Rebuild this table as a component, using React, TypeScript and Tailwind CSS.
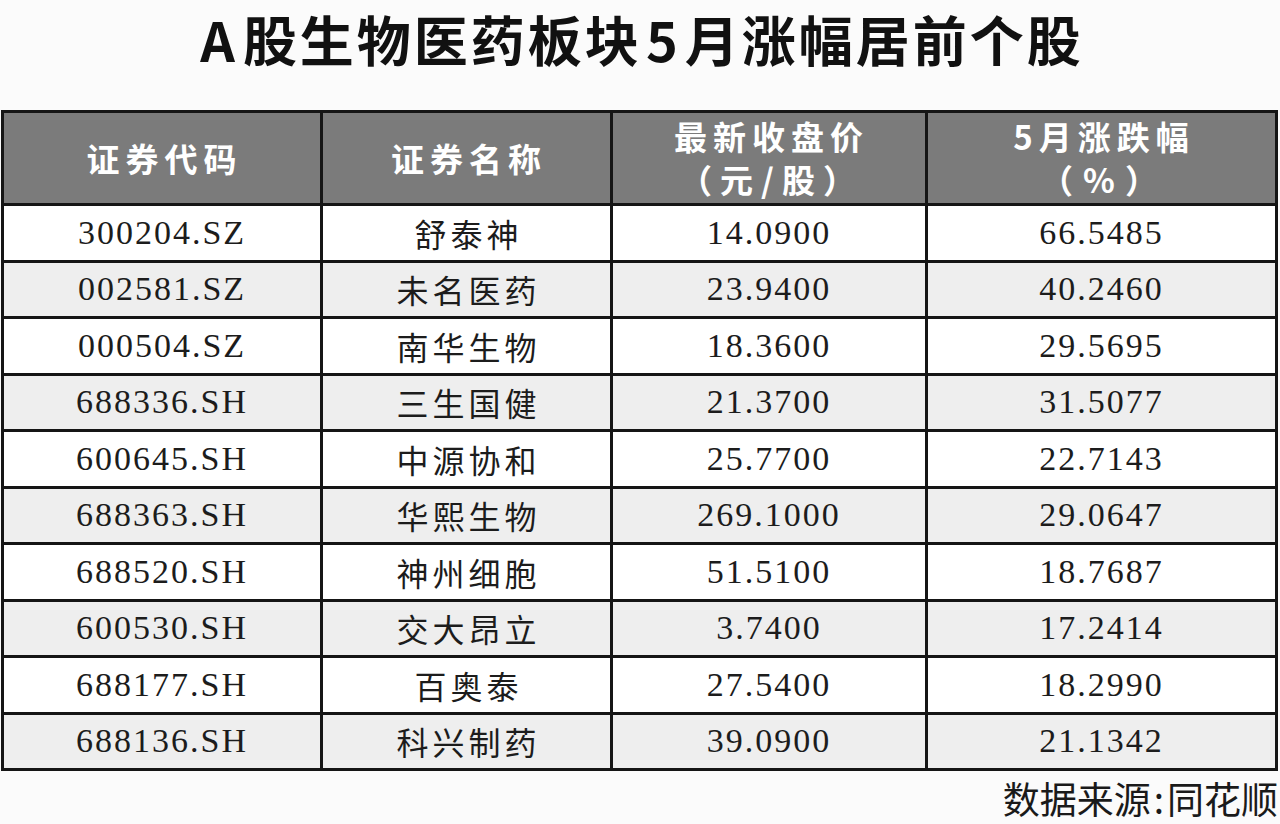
import React from 'react'

const rows = [
  ['300204.SZ', '舒泰神', '14.0900', '66.5485'],
  ['002581.SZ', '未名医药', '23.9400', '40.2460'],
  ['000504.SZ', '南华生物', '18.3600', '29.5695'],
  ['688336.SH', '三生国健', '21.3700', '31.5077'],
  ['600645.SH', '中源协和', '25.7700', '22.7143'],
  ['688363.SH', '华熙生物', '269.1000', '29.0647'],
  ['688520.SH', '神州细胞', '51.5100', '18.7687'],
  ['600530.SH', '交大昂立', '3.7400', '17.2414'],
  ['688177.SH', '百奥泰', '27.5400', '18.2990'],
  ['688136.SH', '科兴制药', '39.0900', '21.1342'],
]

const cjk = "font-['Noto_Sans_CJK_SC',sans-serif]"
const serif = "font-['Liberation_Serif',serif]"

export default function App() {
  return (
    <div className="w-[1280px] h-[824px] overflow-hidden bg-[#fbfbfb] text-[#1c1c1c]">
      {/* Title */}
      <div className="h-[110px] flex items-center justify-center pb-[32px]">
        <h1 className={`${cjk} text-[54px] leading-none font-bold tracking-[3px] text-[#111] pl-[4px]`}>
          <span className="mr-[5px]">A</span>股生物医药板块<span className="ml-[4px] mr-[4px]">5</span>月涨幅居前个股
        </h1>
      </div>

      {/* Table */}
      <div className="pl-[1px] pr-[2px]">
        <table className="w-full border-collapse table-fixed">
          <colgroup>
            <col className="w-[319px]" />
            <col className="w-[290px]" />
            <col className="w-[315px]" />
            <col />
          </colgroup>
          <thead>
            <tr className={`h-[93px] bg-[#7b7b7b] text-white ${cjk} font-bold text-[33px] leading-[43px] tracking-[6px]`}>
              <th className="border-[3px] border-[#151515] font-bold pl-[5px]">证券代码</th>
              <th className="border-[3px] border-[#151515] font-bold pl-[5px]">证券名称</th>
              <th className="border-[3px] border-[#151515] font-bold pl-[5px]">
                <div>最新收盘价</div>
                <div className="tracking-[8px]">（元/股）</div>
              </th>
              <th className="border-[3px] border-[#151515] font-bold pl-[5px]">
                <div>5月涨跌幅</div>
                <div className="tracking-[10px]">（%）</div>
              </th>
            </tr>
          </thead>
          <tbody>
            {rows.map((r, i) => (
              <tr key={r[0]} className={`h-[56.5px] ${i % 2 === 1 ? 'bg-[#eeeeee]' : 'bg-white'}`}>
                <td className={`border-[3px] border-[#151515] text-center ${serif} text-[34px] tracking-[2px] leading-none`}>{r[0]}</td>
                <td className={`border-[3px] border-[#151515] text-center ${cjk} text-[32px] tracking-[4px] leading-none pl-[4px]`}>{r[1]}</td>
                <td className={`border-[3px] border-[#151515] text-center ${serif} text-[34px] tracking-[2px] leading-none`}>{r[2]}</td>
                <td className={`border-[3px] border-[#151515] text-center ${serif} text-[34px] tracking-[2px] leading-none`}>{r[3]}</td>
              </tr>
            ))}
          </tbody>
        </table>
      </div>

      {/* Source */}
      <div className="flex justify-end pt-[9px] pr-[2px]">
        <span className={`${cjk} text-[37px] leading-none text-[#1a1a1a]`}>
          数据来源<span className="mx-[3px]">:</span>同花顺
        </span>
      </div>
    </div>
  )
}
